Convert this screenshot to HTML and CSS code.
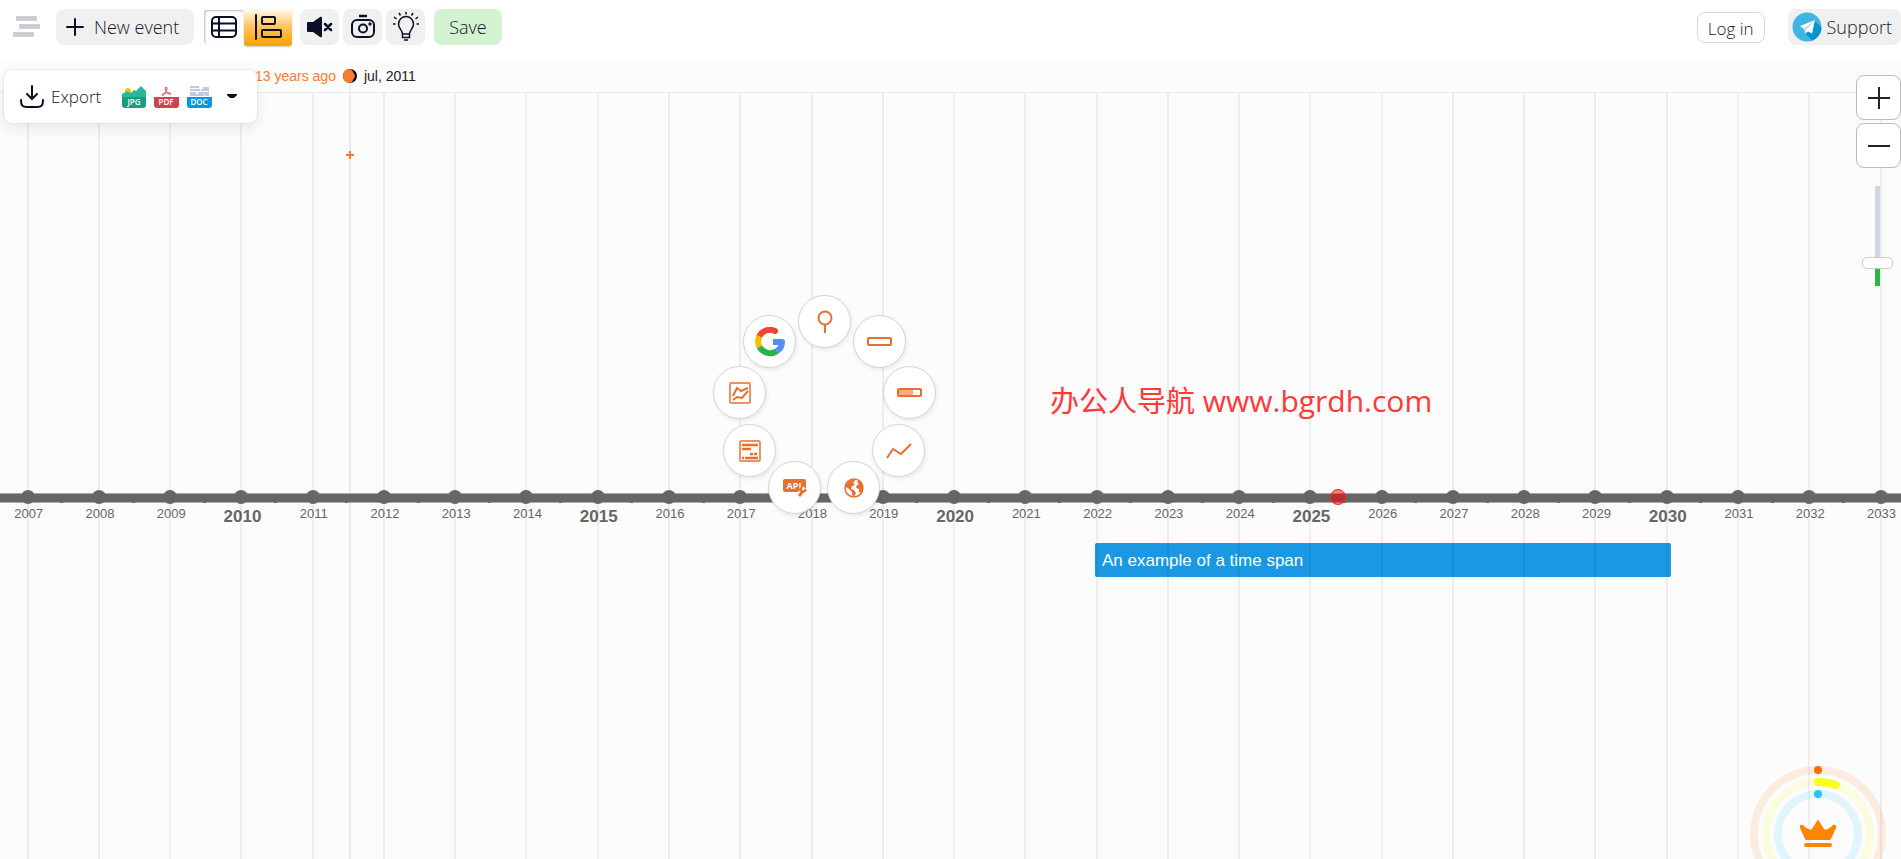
FILE: index.html
```
<!DOCTYPE html>
<html lang="en">
<head>
<meta charset="utf-8">
<meta name="viewport" content="width=device-width, initial-scale=1">
<title>Timeline</title>
<link rel="stylesheet" href="styles.css">
</head>
<body>
<header class="toolbar">
  <button class="menu" aria-label="Menu">
    <svg width="27" height="22" viewBox="0 0 27 22" fill="#cbcdd2"><rect x="3" width="21" height="5" rx="1"/><rect x="6" y="8" width="21" height="5" rx="1"/><rect y="16" width="21" height="5" rx="1"/></svg>
  </button>
  <button class="tool new-event">
    <svg width="18" height="18" viewBox="0 0 18 18" stroke="#0b0f26" stroke-width="2" stroke-linecap="round"><path d="M9 1v16M1 9h16"/></svg>
    New event
  </button>
  <div class="views">
    <button class="view" aria-label="Table view">
      <svg width="26" height="22" viewBox="0 0 26 22" fill="none" stroke="#0b0f26" stroke-width="2"><rect x="1" y="1" width="24" height="20" rx="4"/><path d="M1 7.500h24M1 14.500h24M8 1v20"/></svg>
    </button>
    <button class="view active" aria-label="Timeline view">
      <svg width="28" height="26" viewBox="0 0 28 26" fill="none" stroke="#11111c" stroke-width="2"><path d="M2 1v24" stroke-linecap="round"/><rect x="8" y="3" width="13" height="7" rx="1"/><rect x="8" y="16" width="19" height="7" rx="1"/></svg>
    </button>
  </div>
  <div class="media">
    <button class="tool square" aria-label="Mute">
      <svg width="26" height="22" viewBox="0 0 26 22" fill="#0b0f26"><path d="M1 6h5l7-5q2-1 2 1v18q0 2-2 1l-7-5H1q-1 0-1-1V7q0-1 1-1z"/><path d="M18 8l6 6M24 8l-6 6" stroke="#0b0f26" stroke-width="2.500" stroke-linecap="round"/></svg>
    </button>
    <button class="tool square" aria-label="Take a picture">
      <svg width="26" height="26" viewBox="0 0 26 26" fill="none" stroke="#0b0f26" stroke-width="2"><rect x="2" y="6" width="22" height="17" rx="5"/><circle cx="13" cy="14.500" r="4"/><path d="M9 2h8" stroke-width="2.500"/><circle cx="20" cy="10" r=".7"/></svg>
    </button>
    <button class="tool square" aria-label="Tips">
      <svg class="bulb" width="28" height="30" viewBox="0 0 28 30" fill="none" stroke="#0b0f26" stroke-width="1.500"><path d="M10.500 22c0-4-4-5-4-10a7.500 7.500 0 0 1 15 0c0 5-4 6-4 10zM10.500 22v3.500h7V22M12 28h4"/><path d="M14 2.500V0M8.500 3.500L7 1M19.500 3.500L21 1M4.500 7L2 5M23.500 7L26 5M3.500 12H1M24.500 12H27"/></svg>
    </button>
  </div>
  <button class="tool save">Save</button>
  <a class="login" href="#">Log in</a>
  <a class="tool support" href="#">
    <svg width="30" height="30" viewBox="0 0 30 30"><defs><clipPath id="disc"><circle cx="15" cy="15" r="14.500"/></clipPath></defs><circle cx="15" cy="15" r="14.500" fill="#41b4e6"/><path clip-path="url(#disc)" d="M23 9l10 10v14H24L13 21z" fill="#0693cf"/><path d="M23 8L8 14l4 3 10-8-8 8-1 5 3-2.500 4 2z" fill="#fff"/><path d="M12 17l1 5 1-4 9-10z" fill="#cfd8dc"/></svg>
    Support
  </a>
</header>

<main class="canvas">
  <div class="ruler"></div>
  <i class="cursor-line"></i>
  <div class="span">An example of a time span</div>
  <ol class="axis">
    <li class="year">2007</li><li class="year">2008</li><li class="year">2009</li><li class="year major">2010</li><li class="year">2011</li><li class="year">2012</li><li class="year">2013</li><li class="year">2014</li><li class="year major">2015</li><li class="year">2016</li><li class="year">2017</li><li class="year">2018</li><li class="year">2019</li><li class="year major">2020</li><li class="year">2021</li><li class="year">2022</li><li class="year">2023</li><li class="year">2024</li><li class="year major">2025</li><li class="year">2026</li><li class="year">2027</li><li class="year">2028</li><li class="year">2029</li><li class="year major">2030</li><li class="year">2031</li><li class="year">2032</li><li class="year">2033</li>
  </ol>
  <i class="today"></i>

  <div class="cursor">
    <span class="ago">13 years ago</span>
    <svg class="moon" width="14" height="14" viewBox="0 0 14 14"><circle cx="7" cy="7" r="7" fill="#000"/><path d="M7 0a7 7 0 0 0 0 14q3-1 3.500-4a4 4 0 0 0 0-6Q10 1 7 0z" fill="#ff7b30"/></svg>
    <span class="date">jul, 2011</span>
  </div>
  <svg class="cursor-plus" width="8" height="8" viewBox="0 0 8 8" stroke="#ff7b30" stroke-width="2"><path d="M4 0v8M0 4h8"/></svg>

  <p class="site-name"><span class="han" lang="zh">办公人导航</span> www.bgrdh.com</p>

  <section class="export">
    <button class="export-main">
      <svg width="24" height="23" viewBox="0 0 24 23" fill="none" stroke="#0b0f26" stroke-width="2" stroke-linecap="round" stroke-linejoin="round"><path d="M12 1v13M7 9l5 5 5-5M1 15c0 5 1 7 6 7h10c5 0 6-2 6-7"/></svg>
      Export
    </button>
    <button class="file" aria-label="JPG"><svg width="24" height="22" viewBox="0 0 24 22"><circle cx="6" cy="5" r="3" fill="#ffc800"/><path d="M0 11V8l5-3 4 2 3-3 2 1 5-5 5 5v6z" fill="#28b99a"/><path d="M0 11h24v8q0 3-3 3H3q-3 0-3-3z" fill="#159e80"/><text x="12" y="19">JPG</text></svg></button>
    <button class="file" aria-label="PDF"><svg width="25" height="22" viewBox="0 0 25 22"><path d="M12 1c2 0 1 4-1 6-1 2-3 3-3 2 0-2 9-3 9-1 0 1-4-1-5-3-1-1-1-4 0-4z" fill="none" stroke="#cb464b"/><path d="M0 11h25v8q0 3-3 3H3q-3 0-3-3z" fill="#cb464b"/><text x="12" y="19">PDF</text></svg></button>
    <button class="file" aria-label="DOC"><svg width="25" height="22" viewBox="0 0 25 22"><path d="M3 1h9M3 4h10M14 4h8M16 2h6M3 7h6M11 7h11M3 9h14M18 9h4" stroke="#a9b8dc" stroke-width="1.500"/><path d="M0 11h25v8q0 3-3 3H3q-3 0-3-3z" fill="#0696e8"/><text x="12" y="19">DOC</text></svg></button>
    <button class="more" aria-label="More formats"><svg width="10" height="5" viewBox="0 0 10 5"><path d="M0 0h10v1L7 4H3L0 1z" fill="#0b0f26"/></svg></button>
  </section>

  <aside class="zoom">
    <button class="zoom-button" aria-label="Zoom in"><svg width="22" height="22" viewBox="0 0 22 22" stroke="#212529" stroke-width="2"><path d="M11 0v22M0 11h22"/></svg></button>
    <button class="zoom-button" aria-label="Zoom out"><svg width="22" height="22" viewBox="0 0 22 22" stroke="#212529" stroke-width="2"><path d="M0 11h22"/></svg></button>
    <input class="zoom-level" type="range" min="0" max="100" value="19" aria-label="Zoom level">
  </aside>

  <nav class="wheel" aria-label="Add to timeline">
    <button class="spoke pin" aria-label="Event"><svg width="16" height="24" viewBox="0 0 16 24"><circle cx="8" cy="8" r="6.500"/><path d="M8 15v8"/></svg></button>
    <button class="spoke bar" aria-label="Time span"><svg width="25" height="9" viewBox="0 0 25 9"><rect x="1" y="1" width="23" height="7" rx="1"/></svg></button>
    <button class="spoke progress" aria-label="Progress"><svg width="25" height="9" viewBox="0 0 25 9"><path class="solid" d="M1 1h15v7H1z" fill="#ffa883"/><rect x="1" y="1" width="23" height="7" rx="1"/></svg></button>
    <button class="spoke line" aria-label="Line graph"><svg width="26" height="18" viewBox="0 0 26 18"><path d="M1 16l6-9 8 5L25 2"/></svg></button>
    <button class="spoke globe" aria-label="World events"><svg width="20" height="20" viewBox="0 0 20 20"><circle cx="10" cy="10" r="9" stroke-width="1.500"/><path class="solid" d="M2 7l3-4 5-2 1 2-2 2 2 2-3 1-1 3 3 1 2 3-2 4-2-2v-3l-3-3-3-2zM13 4l2-2 4 5-1 1 1 3-2 4-2-1v-3l-3-1 1-3 2-1z" fill="#e8702f"/></svg></button>
    <button class="spoke api" aria-label="API"><svg width="24" height="20" viewBox="0 0 24 20"><path class="solid" d="M2 1h19q2 0 2 2v11H2q-2 0-2-2V3q0-2 2-2z" fill="#e8702f"/><path d="M15 19l8-8" stroke="#fff" stroke-width="7"/><text x="11" y="11">API</text><path d="M16 18l4-5" stroke-width="3"/><path d="M18 9.500q-1 3 1 4 2 1 4-2" stroke-width="2.500"/></svg></button>
    <button class="spoke card" aria-label="Card"><svg width="22" height="22" viewBox="0 0 22 22"><rect x="1" y="1" width="20" height="20" rx="1" stroke-width="1.500"/><path d="M3 5h16M3 9h9M11 14h3M15 14h3M3 18h2M6 18h13" stroke-width="2.500"/></svg></button>
    <button class="spoke chart" aria-label="Chart"><svg width="22" height="22" viewBox="0 0 22 22"><rect x="1" y="1" width="20" height="20" rx="1" stroke-width="1.500"/><path d="M4 14l4-8 4 3 7-3M4 18l4-3 5 1 6-7"/></svg></button>
    <button class="spoke google" aria-label="Google"><svg width="30" height="30" viewBox="0 0 30 30"><path d="M4.500 9A12 12 0 0 1 20 4" stroke="#f24235" stroke-linecap="round"/><path d="M4.500 20A12 12 0 0 1 4.500 9" stroke="#fbbc05"/><path d="M22 24A12 12 0 0 1 4.500 20" stroke="#28b446"/><path d="M18 15h9c0 5-2 7-5 9" stroke="#518ef8" stroke-linejoin="round"/></svg></button>
  </nav>

  <button class="premium" aria-label="Upgrade">
    <svg width="136" height="136" viewBox="0 0 136 136" fill="none" stroke-width="8" stroke-linecap="round">
      <circle cx="68" cy="68" r="64" stroke="#ff6b00" stroke-opacity=".11"/><circle cx="68" cy="68" r="52" stroke="#f9ff20" stroke-opacity=".13"/><circle cx="68" cy="68" r="40" stroke="#24c4ff" stroke-opacity=".12"/>
      <path d="M68 4h.01" stroke="#ff6b00"/><path d="M68 16a52 52 0 0 1 18 3" stroke="#f9ff20"/><path d="M68 28h.01" stroke="#24c4ff"/>
      <path d="M55 73L50 62q-1-4 3-3 6 6 9 4l5-8q1-2 2 0l5 8q3 2 9-4 4-1 3 3l-5 11q0 1-2 1H57q-2 0-2-1z" fill="#ff8500"/><path d="M56 79h24" stroke="#ff8500" stroke-width="4"/>
    </svg>
  </button>
</main>
</body>
</html>
```
FILE: styles.css
```
* { box-sizing: border-box; }
body {
  margin: 0;
  min-height: 100vh;
  display: flex;
  flex-direction: column;
  overflow: hidden;
  background: #fff;
  font-family: "Liberation Sans", Arial, sans-serif;
}
button { border: 0; padding: 0; background: none; font: inherit; color: inherit; cursor: pointer; }
a { color: inherit; text-decoration: none; }
svg { display: block; flex: none; }

.toolbar {
  display: flex;
  align-items: center;
  height: 59px;
  padding: 0 0 5px 13px;
  font: 300 18px "Open Sans", "Noto Sans", sans-serif;
  color: #17172b;
}
.tool {
  display: flex;
  align-items: center;
  height: 36px;
  border-radius: 8px;
  background: #f0f0f0;
}
.new-event { margin-left: 16px; padding: 0 15px 0 10px; gap: 10px; }
.views { display: flex; align-items: center; margin-left: 10px; }
.view {
  display: grid;
  place-items: center;
  width: 40px;
  height: 34px;
  border-radius: 3px;
  box-shadow: inset 1px 1px 2px #bbb;
}
.view.active {
  width: 48px;
  height: 38px;
  background: linear-gradient(#fff, #ffc865 45%, #ffa000);
  box-shadow: 0 1px 2px #ccc;
}
.media { display: flex; gap: 4px; margin-left: 8px; }
.square { width: 39px; justify-content: center; }
.save { margin-left: 9px; padding: 0 15px; background: #d3f2cf; }
.login {
  margin-left: auto;
  padding: 0 10px;
  height: 31px;
  line-height: 31px;
  font-size: 17px;
  border: 1px solid #d8d8d8;
  border-radius: 8px;
}
.support { margin-left: 23px; padding: 0 9px 0 4px; gap: 5px; }

.canvas { position: relative; flex: 1; display: flex; background: #fcfcfc; overflow: hidden; }
.ruler { position: absolute; inset: 0 0 auto; height: 34px; border-bottom: 1px solid #eaeaea; }

.axis {
  position: relative;
  flex: 1;
  display: flex;
  margin: 0 -15px 0 -8px;
  padding: 0;
  list-style: none;
  color: #666;
  font-size: 13px;
}
.axis::before {
  content: "";
  position: absolute;
  top: 434px;
  left: 0;
  right: 0;
  height: 8px;
  background: #666;
  border-top: 1px solid #aaa;
  border-bottom: 1px solid #aaa;
}
.year {
  position: relative;
  flex: 1;
  padding: 447px 0 0 2px;
  line-height: 15px;
  text-align: center;
  background: linear-gradient(#666, #666) right 442px / 3px 2px no-repeat;
}
.major { font-size: 17px; font-weight: bold; line-height: 21px; }
.year::before {
  content: "";
  position: absolute;
  inset: 34px auto 0 50%;
  width: 2px;
  margin-left: -1px;
  background: rgba(0, 0, 0, .06);
}
.year::after {
  content: "";
  position: absolute;
  top: 431px;
  left: 50%;
  width: 14px;
  height: 14px;
  margin-left: -7px;
  border-radius: 50%;
  background: #666;
}
.today {
  position: absolute;
  top: 430px;
  left: 1330px;
  width: 16px;
  height: 16px;
  border: 1px solid #f22;
  border-radius: 50%;
  background: rgba(255, 0, 0, .5);
}
.span {
  position: absolute;
  top: 484px;
  left: 1095px;
  width: 576px;
  padding: 1px 7px 0;
  line-height: 33px;
  border-radius: 2px;
  background: #1a98e3;
  color: #fff;
  font-size: 17px;
}

.cursor {
  position: absolute;
  top: 8px;
  left: 255px;
  display: flex;
  align-items: center;
  gap: 7px;
  font-size: 14px;
  line-height: 18px;
}
.ago { color: #ff7b30; }
.date { color: #222; }
.cursor-line { position: absolute; inset: 23px auto 0 349px; width: 2px; background: #ebebeb; }
.cursor-plus { position: absolute; top: 92px; left: 346px; }

.site-name {
  position: absolute;
  top: 318px;
  left: 1050px;
  margin: 0;
  color: #ff3838;
  font: 30px/44px "Open Sans", sans-serif;
}
.han { font: 29px/44px "Noto Sans CJK SC", sans-serif; }

.export {
  position: absolute;
  top: 11px;
  left: 4px;
  display: flex;
  align-items: center;
  gap: 8px;
  height: 53px;
  padding: 0 20px 0 16px;
  border-radius: 8px;
  background: #fff;
  box-shadow: 0 0 2px #ccc, 0 6px 14px rgba(0, 0, 0, .08);
  color: #17172b;
}
.export-main { display: flex; align-items: center; gap: 7px; margin-right: 13px; font: 300 17px "Open Sans", sans-serif; }
.file text { font: 600 8px "Open Sans", sans-serif; fill: #fff; text-anchor: middle; }
.more { margin-left: 7px; }

.zoom { position: absolute; top: 16px; right: 0; width: 45px; display: flex; flex-direction: column; align-items: center; gap: 3px; }
.zoom-button {
  display: grid;
  place-items: center;
  width: 45px;
  height: 45px;
  border: 1px solid #bbb;
  border-radius: 8px;
  background: #fff;
}
.zoom-level {
  appearance: none;
  writing-mode: vertical-lr;
  direction: rtl;
  width: 31px;
  height: 100px;
  margin: 15px 3px 0 0;
  background: linear-gradient(#cfd8e0 75%, #2cb742 75%) center / 5px 100% no-repeat;
}
.zoom-level::-webkit-slider-thumb {
  appearance: none;
  width: 31px;
  height: 12px;
  border: 1px solid #ccc;
  border-radius: 5px;
  background: #fff;
}

.wheel { position: absolute; top: 236px; left: 713px; width: 223px; height: 220px; }
.spoke {
  position: absolute;
  display: grid;
  place-items: center;
  width: 53px;
  height: 53px;
  border: 1px solid #d4d4d4;
  border-radius: 50%;
  background: #fff;
  box-shadow: 1px 2px 4px rgba(0, 0, 0, .08);
}
.spoke svg { fill: none; stroke: #e8702f; stroke-width: 2; }
.spoke .solid { stroke: none; }
.google svg { stroke-width: 6; }
.api text { font: bold 9px "Open Sans", sans-serif; fill: #fff; stroke: none; text-anchor: middle; }
.pin { left: 85px; top: 0; }
.bar { left: 140px; top: 20px; }
.progress { left: 170px; top: 71px; }
.line { left: 159px; top: 129px; }
.globe { left: 114px; top: 166px; }
.api { left: 55px; top: 166px; }
.card { left: 10px; top: 129px; }
.chart { left: 0; top: 71px; }
.google { left: 30px; top: 20px; }

.premium { position: absolute; right: 15px; bottom: -43px; }
```
